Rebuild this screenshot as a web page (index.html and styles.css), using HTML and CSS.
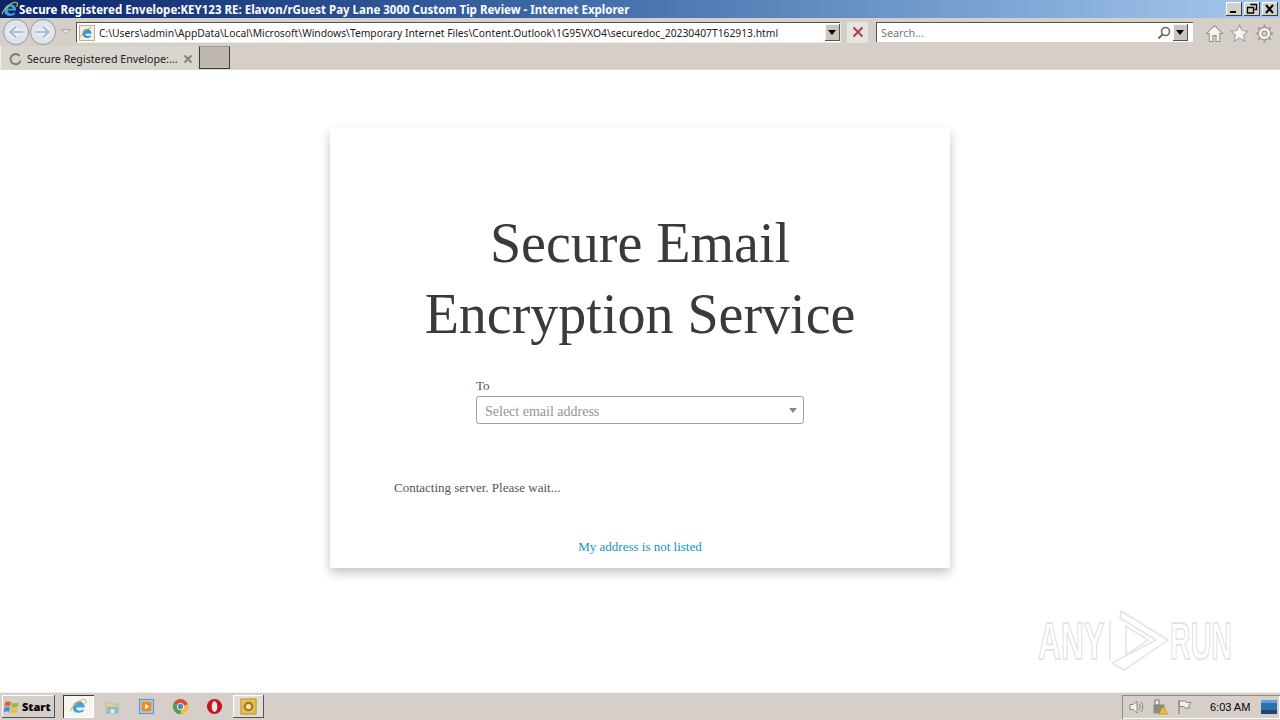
FILE: index.html
```html
<!DOCTYPE html>
<html lang="en">
<head>
<meta charset="utf-8">
<title>Secure Registered Envelope</title>
<link rel="stylesheet" href="styles.css">
</head>
<body>
<div class="window">
  <header class="titlebar">
    <svg class="title-ie" viewBox="0 0 18 18"><path d="M3 10.500C3 6 6 3.500 9.500 3.500S15.500 6 15.500 10H6.500C6.500 13.500 11 14.500 14.500 12L14 14.500C9 17 3 15.500 3 10.500Z" fill="#3fa2dc"/><path d="M6.800 8.300H12C11.800 5.500 7.200 5.500 6.800 8.300Z" fill="#0b2f6b"/><path d="M1 14C0 11 9 2 14.500 1.300C17 1 17.500 3.500 16 6" fill="none" stroke="#e8b93a" stroke-width="1.200"/></svg>
    <span class="title-text">Secure Registered Envelope:KEY123 RE: Elavon/rGuest Pay Lane 3000 Custom Tip Review - Internet Explorer</span>
    <div class="win-buttons">
      <span class="win-btn"><svg viewBox="0 0 16 14"><rect x="4" y="9" width="6" height="2" fill="#000"/></svg></span>
      <span class="win-btn"><svg viewBox="0 0 16 14"><path d="M6.500 2.500h6v5h-2M3.500 5.500h6v5.500h-6z" fill="none" stroke="#000" stroke-width="1.300"/></svg></span>
      <span class="win-btn"><svg viewBox="0 0 16 14"><path d="M4 3l7 8M11 3l-7 8" stroke="#000" stroke-width="2"/></svg></span>
    </div>
  </header>

  <div class="toolbar">
    <div class="nav-group">
      <svg class="nav-btn" viewBox="0 0 28 28"><circle cx="14" cy="14" r="12.500" fill="#dfe4ea" stroke="#8f9aa6"/><path d="M21 14H9M14 8.500L8 14l6 5.500" fill="none" stroke="#fff" stroke-width="4.500"/><path d="M21 14H9M14 8.500L8 14l6 5.500" fill="none" stroke="#a9c0da" stroke-width="2.500"/></svg>
      <svg class="nav-btn" viewBox="0 0 28 28"><circle cx="14" cy="14" r="12.500" fill="#dfe4ea" stroke="#8f9aa6"/><path d="M7 14H19M14 8.500L20 14l-6 5.500" fill="none" stroke="#fff" stroke-width="4.500"/><path d="M7 14H19M14 8.500L20 14l-6 5.500" fill="none" stroke="#a9c0da" stroke-width="2.500"/></svg>
      <svg class="nav-drop" viewBox="0 0 10 6"><path d="M0.500 0.500L5 5l4.500-4.500z" fill="#e6e3df" stroke="#a9a6a2"/></svg>
    </div>
    <div class="address">
      <svg class="addr-ie" viewBox="0 0 16 16"><rect x="0.500" y="0.500" width="15" height="15" fill="#f4f1e3" stroke="#b9b39c"/><path d="M3.500 9C3.500 5.500 5.700 4 8 4s4.500 1.700 4.500 4.800H6C6 11 9.500 11.700 12 10l-.4 2C8 14 3.500 12.500 3.500 9Z" fill="#2f97d8"/><path d="M2 12C2 9 8 3 12.500 2.500" fill="none" stroke="#e3a92f"/></svg>
      <span class="addr-text">C:\Users\admin\AppData\Local\Microsoft\Windows\Temporary Internet Files\Content.Outlook\1G95VXO4\securedoc_20230407T162913.html</span>
      <span class="combo-btn"></span>
    </div>
    <span class="stop-btn"><svg viewBox="0 0 12 12"><path d="M1.500 1.500l9 9M10.500 1.500l-9 9" stroke="#b5403c" stroke-width="2"/></svg></span>
    <div class="search">
      <span class="search-text">Search...</span>
      <svg class="search-icon" viewBox="0 0 14 14"><circle cx="8.500" cy="5.500" r="4" fill="none" stroke="#6d6b66" stroke-width="1.600"/><path d="M5.500 8.500L1.500 12.500" stroke="#6d6b66" stroke-width="2"/></svg>
      <span class="combo-btn"></span>
    </div>
    <div class="tools">
      <svg class="tool" viewBox="0 0 18 18"><path d="M9 1.500L1.500 9H4v7.500h3.500V11h3v5.500H14V9h2.500z" fill="#f6f5f2" stroke="#96938e"/></svg>
      <svg class="tool" viewBox="0 0 18 18"><path d="M9 1l2.400 5.200 5.600.6-4.200 3.800 1.200 5.600L9 13.400l-5 2.800 1.200-5.600L1 6.800l5.600-.6z" fill="#f6f5f2" stroke="#a3a09b"/></svg>
      <svg class="tool" viewBox="0 0 18 18"><circle cx="9" cy="9" r="5.800" fill="#f6f5f2" stroke="#96938e"/><circle cx="9" cy="9" r="2.400" fill="#d5cfc9" stroke="#96938e"/><path d="M9 .5v3M9 14.500v3M.5 9h3M14.500 9h3M3 3l2.100 2.100M12.900 12.900L15 15M15 3l-2.100 2.100M5.100 12.900L3 15" stroke="#a3a09b" stroke-width="2"/></svg>
    </div>
  </div>

  <div class="tabbar">
    <div class="tab">
      <svg class="spinner" viewBox="0 0 14 14"><path d="M11.500 3.200A5.500 5.500 0 1 0 12.500 8" fill="none" stroke="#7b7b78" stroke-width="2"/></svg>
      <span class="tab-text">Secure Registered Envelope:...</span>
      <svg class="tab-close" viewBox="0 0 10 10"><path d="M1.500 1.500l7 7M8.500 1.500l-7 7" stroke="#85827e" stroke-width="2"/></svg>
    </div>
    <span class="new-tab"></span>
  </div>

  <main class="page">
    <section class="card">
      <h1 class="heading">Secure Email<br>Encryption Service</h1>
      <div class="field">
        <label class="field-label">To</label>
        <div class="select">
          <span class="select-text">Select email address</span>
          <i class="caret"></i>
        </div>
      </div>
      <p class="status">Contacting server. Please wait...</p>
      <a class="link">My address is not listed</a>
    </section>
    <svg class="watermark" viewBox="0 0 200 66">
      <g class="wm-strokes">
        <text class="wm-text" transform="translate(2 51) scale(.61 1)">ANY</text>
        <text class="wm-text" transform="translate(134 51) scale(.55 1)">RUN</text>
        <path d="M74 12V52M85 3L132 32 88 62 76 55 120 32 84 10ZM90 18V47L112 32Z"/>
      </g>
    </svg>
  </main>

  <footer class="taskbar">
    <span class="start"><svg class="flag" viewBox="0 0 16 16"><path d="M1 3.500C3 2 5 2 7 3L6 7.500C4.500 6.500 2.500 6.500 0.500 8Z" fill="#e2622f"/><path d="M8 3.500C10 4.500 12.500 4.500 15 3L14 7.500C12 8.800 9.500 8.800 7 8Z" fill="#9cbe3f"/><path d="M0.300 9C2.500 7.500 4 7.500 6 8.500L5 13C3.500 12 1.500 12 -0.500 13.500Z" fill="#3f8fd8"/><path d="M7 9C9 10 11 10 13.800 8.500L13 13C11 14.300 8.500 14.300 6 13.500Z" fill="#ecc032"/></svg><b>Start</b></span>
    <div class="apps">
      <span class="app app-active"><svg viewBox="0 0 18 18"><path d="M3 10.500C3 6 6 3.500 9.500 3.500S15.500 6 15.500 10H6.500C6.500 13.500 11 14.500 14.500 12L14 14.500C9 17 3 15.500 3 10.500Z" fill="#3fa2dc"/><path d="M1 14C0 11 9 2 14.500 1.300C17 1 17.500 3.500 16 6" fill="none" stroke="#e8b93a" stroke-width="1.200"/></svg></span>
      <span class="app"><svg viewBox="0 0 18 18"><path d="M2 5h5l1 1.500h7V16H2z" fill="#e9d48c" stroke="#b9a562" stroke-width=".6"/><path d="M3 9h12v7H3z" fill="#86bcd8"/><path d="M7 16v-4h4v4z" fill="#e8eef0"/></svg></span>
      <span class="app"><svg viewBox="0 0 18 18"><rect x="1.500" y="1.500" width="15" height="15" fill="#a9c6e4" stroke="#5f8fc0"/><rect x="4" y="4" width="10" height="10" rx="1.500" fill="#ee8c1e"/><path d="M7.500 6l4 3-4 3z" fill="#fff"/></svg></span>
      <span class="app"><svg viewBox="0 0 18 18"><circle cx="9" cy="9" r="8" fill="#d9483b"/><path d="M9 9L16.500 6.500A8 8 0 0 1 9 17z" fill="#f2c230"/><path d="M9 9L9 17A8 8 0 0 1 2 5z" fill="#4aa257"/><circle cx="9" cy="9" r="3.800" fill="#e8eef7"/><circle cx="9" cy="9" r="2.800" fill="#4f86d8"/></svg></span>
      <span class="app"><svg viewBox="0 0 18 18"><circle cx="9" cy="9" r="8" fill="#c3141a"/><ellipse cx="9" cy="9" rx="3" ry="5.800" fill="#f8e8e4"/></svg></span>
      <span class="app app-open"><svg viewBox="0 0 18 18"><rect x="1" y="1" width="16" height="16" fill="#e9c25a" stroke="#b08c2c"/><circle cx="9" cy="9" r="4" fill="#f5e3a5" stroke="#a67f1c" stroke-width="2.500"/></svg></span>
    </div>
    <div class="tray">
      <svg class="tray-icon" viewBox="0 0 16 16"><path d="M2 5.500h3L9 2v12l-4-3.500H2z" fill="#f2f1ee" stroke="#898680"/><path d="M11 5c1.500 2 1.500 4 0 6M13 3c2.400 3 2.400 7 0 10" fill="none" stroke="#898680"/></svg>
      <svg class="tray-icon" viewBox="0 0 16 16"><rect x="1.500" y="5.500" width="11" height="9" fill="#8d8a84"/><rect x="3" y="1" width="4" height="5" fill="#f2f1ee" stroke="#7a7770"/><path d="M11 7l4.500 8h-9z" fill="#edc22e" stroke="#9a7d12" stroke-width=".6"/></svg>
      <svg class="tray-icon" viewBox="0 0 16 16"><path d="M3 1v14" stroke="#898680" stroke-width="1.300"/><path d="M3.500 2h6l1 1.500H15l-2.500 3.500 1.500 2H9L8 7.500H3.500z" fill="#f2f1ee" stroke="#898680"/></svg>
      <span class="clock">6:03 AM</span>
      <svg class="tray-desktop" viewBox="0 0 16 14"><rect width="16" height="14" fill="#2f6fae"/><path d="M0 10h16v4H0z" fill="#23456f"/><path d="M0 0h16v3H0z" fill="#5e9fd6"/></svg>
    </div>
  </footer>
</div>
</body>
</html>
```
FILE: styles.css
```css
* { box-sizing: border-box; }
html, body { margin: 0; height: 100%; overflow: hidden; }
body { font-family: "Noto Sans", sans-serif; background: #fff; }
.window { display: flex; flex-direction: column; width: 1280px; height: 720px; }

.titlebar { flex: 0 0 18px; display: flex; align-items: center; padding-left: 1px; background: linear-gradient(90deg, #0a246a 0%, #3f6ca8 45%, #a6caf0 100%); }
.title-ie { width: 18px; height: 17px; flex: none; }
.title-text { font: bold 11.5px "Noto Sans", sans-serif; color: #fff; white-space: nowrap; }
.win-buttons { margin-left: auto; display: flex; gap: 2px; padding-right: 2px; }
.win-btn { width: 16px; height: 14px; background: #d4d0c8; box-shadow: inset -1px -1px #404040, inset 1px 1px #fff; display: block; }
.win-btn svg { display: block; width: 16px; height: 14px; }

.toolbar { flex: 0 0 28px; display: flex; align-items: center; background: #d6cfc9; }
.nav-group { flex: 0 0 76px; display: flex; align-items: center; padding-left: 2px; }
.nav-btn { width: 28px; height: 28px; margin-right: -1px; flex: none; }
.nav-drop { width: 10px; height: 6px; margin-left: 5px; flex: none; }
.address { width: 764px; height: 20px; display: flex; align-items: center; background: #fff; border-top: 1px solid #55534c; border-left: 1px solid #55534c; box-shadow: 1px 1px #ece9e4; }
.addr-ie { width: 16px; height: 16px; margin-left: 2px; flex: none; }
.addr-text { margin-left: 4px; font: 10.3px "Noto Sans", sans-serif; color: #222; white-space: nowrap; flex: 1; }
.combo-btn { width: 15px; height: 17px; flex: none; background: #c9c6bf; box-shadow: inset -1px -1px #55534c, inset 1px 1px #f4f3f0; position: relative; display: block; }
.combo-btn::after { content: ""; position: absolute; left: 3px; top: 6px; border: 4px solid transparent; border-top: 5px solid #000; border-bottom: 0; }
.stop-btn { width: 21px; height: 21px; margin-left: 7px; background: #e9e4e4; border-radius: 2px; display: flex; align-items: center; justify-content: center; flex: none; }
.stop-btn svg { width: 12px; height: 12px; }
.search { width: 317px; height: 20px; margin-left: 8px; padding-right: 5px; display: flex; align-items: center; background: #fff; border-top: 1px solid #55534c; border-left: 1px solid #55534c; flex: none; }
.search-text { margin-left: 4px; font: 10.8px "Noto Sans", sans-serif; color: #777; flex: 1; }
.search-icon { width: 14px; height: 14px; margin-right: 2px; flex: none; }
.tools { display: flex; gap: 6px; margin-left: 12px; padding-top: 3px; }
.tool { width: 19px; height: 19px; flex: none; }

.tabbar { flex: 0 0 24px; display: flex; align-items: stretch; background: #d6cfc9; border-bottom: 1px solid #dcd8d3; }
.tab { width: 197px; display: flex; align-items: center; padding: 3px 0 0 8px; background: #d9d5cf; border-left: 1px solid #efedea; }
.spinner { width: 13px; height: 13px; flex: none; }
.tab-text { margin-left: 5px; width: 156px; font: 10.7px "Noto Sans", sans-serif; color: #222; white-space: nowrap; }
.tab-close { width: 10px; height: 10px; flex: none; }
.new-tab { width: 31px; height: 23px; margin-left: 2px; background: #bfb8b2; border-left: 1px solid #3c3a36; border-right: 1px solid #3c3a36; border-bottom: 1px solid #3c3a36; border-top: 1px solid #9a958f; }

.page { flex: 1; position: relative; display: flex; justify-content: center; padding-top: 58px; background: #fff; }
.card { width: 620px; height: 440px; background: #fff; box-shadow: 0 5px 10px rgba(0, 0, 0, 0.23); padding: 80px 64px 0; display: flex; flex-direction: column; font-family: "Liberation Serif", serif; color: #555; }
.heading { margin: 0; font: normal 56px/71px "Liberation Serif", serif; text-align: center; color: #3a3a3a; }
.field { width: 328px; margin: 28px auto 0; }
.field-label { display: block; font-size: 13px; line-height: 15px; margin-bottom: 3px; color: #555; }
.select { height: 28px; display: flex; align-items: center; justify-content: space-between; padding: 0 6px 0 8px; border: 1px solid #a0a0a0; border-radius: 3px; font-size: 14px; color: #949494; }
.select-text { padding-top: 3px; }
.caret { width: 0; height: 0; border: 4px solid transparent; border-top: 5px solid #888; border-bottom: 0; }
.status { margin: 56px 0 0; font-size: 13px; line-height: 15px; color: #555; }
.link { margin-top: 44px; text-align: center; font-size: 13px; line-height: 15px; color: #0f96c4; }

.watermark { position: absolute; left: 1036px; top: 538px; width: 200px; height: 66px; filter: blur(0.5px); }
.wm-strokes { fill: none; stroke: #e4e4e4; stroke-width: 1.500; }
.wm-text { font: bold 52px "Liberation Sans", sans-serif; vector-effect: non-scaling-stroke; }

.taskbar { flex: 0 0 28px; display: flex; align-items: center; background: #d6cfc9; border-top: 1px solid #f2efec; box-shadow: 0 -1px #c4bfb9; }
.start { width: 53px; height: 23px; margin-left: 2px; display: flex; align-items: center; gap: 2px; padding-left: 2px; background: #d6cfc9; box-shadow: inset -1px -1px #55534c, inset 1px 1px #fff; font: bold 11px "Noto Sans", sans-serif; color: #000; }
.flag { width: 16px; height: 16px; flex: none; }
.apps { display: flex; margin-left: 8px; gap: 3px; }
.app { width: 31px; height: 23px; display: flex; align-items: center; justify-content: center; }
.app svg { width: 17px; height: 17px; }
.app-active { background: #f6f5f2; box-shadow: inset 1px 1px #3c3a36, inset -1px -1px #fff; }
.app-open { box-shadow: inset -1px -1px #55534c, inset 1px 1px #fff; background: #e3ddd7; }
.tray { margin-left: auto; width: 158px; height: 24px; display: flex; align-items: center; padding-left: 6px; box-shadow: inset 1px 1px #8f8b85, inset -1px -1px #fff; }
.tray-icon { width: 16px; height: 16px; margin-right: 8px; flex: none; }
.clock { margin-left: 10px; font: 11px "Liberation Sans", sans-serif; color: #000; }
.tray-desktop { width: 16px; height: 14px; margin-left: 11px; flex: none; }
```
